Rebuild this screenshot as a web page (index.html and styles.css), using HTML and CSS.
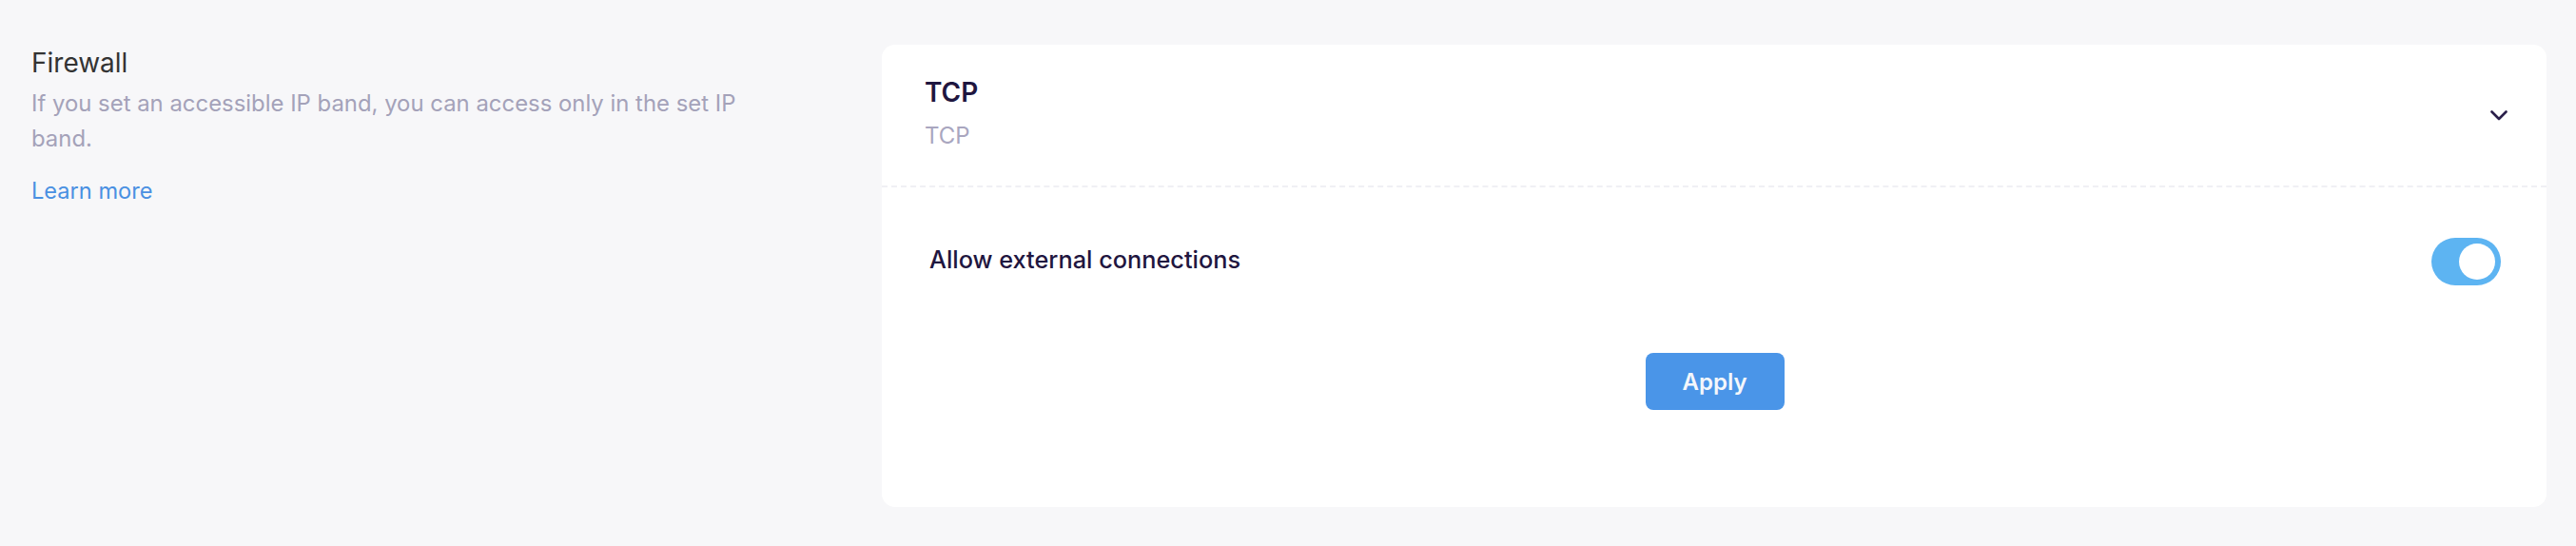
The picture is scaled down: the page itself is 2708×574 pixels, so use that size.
FILE: index.html
```html
<!DOCTYPE html>
<html lang="en">
<head>
<meta charset="utf-8">
<title>Firewall</title>
<link rel="stylesheet" href="styles.css">
</head>
<body>
<main class="page">
  <section class="intro">
    <h2 class="intro-title">Firewall</h2>
    <p class="intro-desc">If you set an accessible IP band, you can access only in the set IP band.</p>
    <a class="intro-link" href="#">Learn more</a>
  </section>
  <section class="card">
    <header class="card-head">
      <div class="card-head-text">
        <div class="card-title">TCP</div>
        <div class="card-sub">TCP</div>
      </div>
      <svg class="chevron" width="18" height="11" viewBox="0 0 18 11" fill="none">
        <path d="M1.5 1.5 L9 9 L16.5 1.5" stroke="#2a1f4a" stroke-width="2.6" stroke-linecap="round" stroke-linejoin="round"/>
      </svg>
    </header>
    <div class="card-body">
      <div class="setting-row">
        <span class="setting-label">Allow external connections</span>
        <span class="toggle"><span class="toggle-knob"></span></span>
      </div>
      <div class="actions">
        <button class="btn-apply" type="button">Apply</button>
      </div>
    </div>
  </section>
</main>
</body>
</html>
```
FILE: styles.css
```css
* { box-sizing: border-box; }
html, body {
  margin: 0;
  background: #f7f7f9;
  font-family: Inter, "Noto Sans", sans-serif;
}
.page {
  display: flex;
  align-items: flex-start;
  padding: 47px 31px 0 33px;
  height: 574px;
}
.intro {
  width: 790px;
  flex: none;
  margin-right: 104px;
}
.intro-title {
  margin: -1px 0 0;
  font-size: 28px;
  line-height: 40px;
  font-weight: 400;
  color: #333333;
}
.intro-desc {
  margin: 4px 0 0;
  font-size: 23.9px;
  line-height: 37px;
  color: #a4a2b9;
}
.intro-link {
  display: block;
  margin-top: 18px;
  font-size: 23.6px;
  line-height: 37px;
  color: #4a90e2;
  text-decoration: none;
}
.card {
  flex: 1;
  background: #ffffff;
  border-radius: 14px;
  height: 486px;
  display: flex;
  flex-direction: column;
}
.card-head {
  display: flex;
  align-items: center;
  justify-content: space-between;
  height: 150px;
  padding: 0 41px 0 45px;
  border-bottom: 2px dashed #f0f0f4;
}
.card-head-text {
  display: flex;
  flex-direction: column;
  gap: 6px;
  margin-top: -2px;
}
.card-title {
  font-size: 28px;
  line-height: 40px;
  font-weight: 600;
  color: #1f1640;
}
.card-sub {
  font-size: 24px;
  line-height: 40px;
  color: #a9a6bf;
}
.chevron {
  display: block;
}
.card-body {
  padding: 53px 48px 0 50px;
}
.setting-row {
  display: flex;
  align-items: center;
  justify-content: space-between;
  height: 50px;
}
.setting-label {
  font-size: 25.3px;
  font-weight: 500;
  color: #1f1640;
  margin-top: -5px;
}
.toggle {
  display: flex;
  align-items: center;
  justify-content: flex-end;
  width: 73px;
  height: 50px;
  padding: 0 6px;
  border-radius: 25px;
  background: #5db4f2;
}
.toggle-knob {
  width: 38px;
  height: 38px;
  border-radius: 50%;
  background: #ffffff;
}
.actions {
  display: flex;
  justify-content: center;
  margin-top: 71px;
}
.btn-apply {
  width: 146px;
  height: 60px;
  border: none;
  border-radius: 8px;
  background: #4a95e8;
  color: #f4f7fb;
  font-family: Inter, "Noto Sans", sans-serif;
  font-size: 24px;
  font-weight: 600;
  margin-left: -1px;
}
```
